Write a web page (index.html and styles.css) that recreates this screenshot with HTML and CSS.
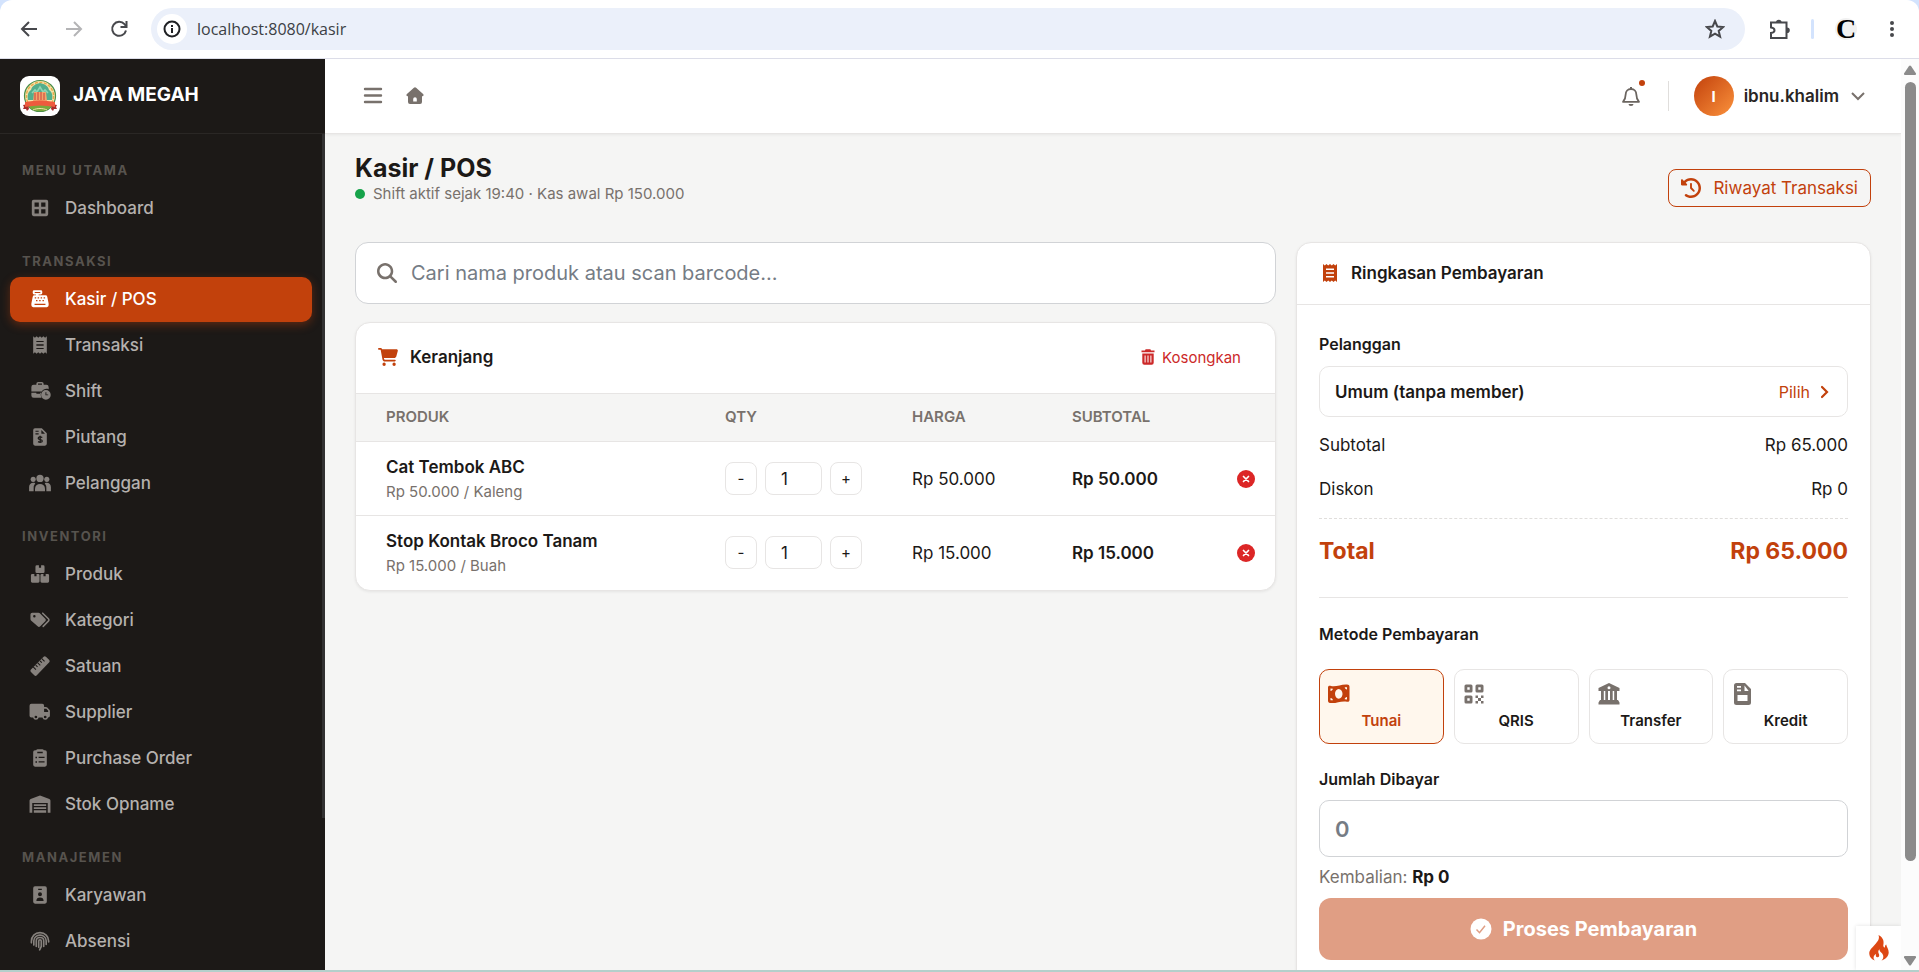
FILE: index.html
```html
<!DOCTYPE html>
<html lang="id">
<head>
<meta charset="utf-8">
<title>Kasir / POS - Jaya Megah</title>
<link rel="stylesheet" href="styles.css">
</head>
<body>
<div class="toolbar-wrap">
  <div class="toolbar">
    <button class="tool" aria-label="Kembali"><svg class="ic18" viewBox="0 0 18 18"><path class="ln" d="M17 9H2.500M9 2L2 9l7 7"/></svg></button>
    <button class="tool tool-off" aria-label="Maju"><svg class="ic18" viewBox="0 0 18 18"><path class="ln" d="M1 9h14.500M9 2l7 7-7 7"/></svg></button>
    <button class="tool" aria-label="Muat ulang"><svg class="ic18" viewBox="0 0 18 18"><path class="ln" d="M16 10.500A7 7 0 1 1 14.500 4.200L16.500 6.500"/><path class="ln" d="M16.500 1v6h-6"/></svg></button>
    <div class="address">
      <button class="site-info" aria-label="Info situs"><svg class="ic18" viewBox="0 0 18 18"><circle class="ln" cx="9" cy="9" r="7.500"/><path d="M8 8h2v5H8zM8 5h2v2H8z"/></svg></button>
      <input class="url" type="text" value="localhost:8080/kasir" aria-label="Alamat">
      <button class="star" aria-label="Markah"><svg class="ic20" viewBox="0 0 20 20"><path class="ln" d="M10 2l2.300 5.500 5.900.5-4.500 3.900 1.400 5.800-5.100-3.100-5.100 3.100 1.400-5.800L1.800 8l5.900-.5z"/></svg></button>
    </div>
    <button class="tool ext" aria-label="Ekstensi"><svg class="ic22" viewBox="0 0 22 22"><path class="ln" d="M2 4.500h15.500v15.500H2v-5c2.500-.3 3.500-1.300 3.500-2.800S4.500 9.700 2 9.400z"/><path d="M7 4.500a2.800 2.800 0 0 1 5.600 0zM18 9.500a2.800 2.800 0 0 1 0 5.600z"/></svg></button>
    <span class="tool-sep"></span>
    <button class="profile" aria-label="Profil">C</button>
    <button class="tool menu-dots" aria-label="Menu"><svg class="ic18" viewBox="0 0 18 18"><circle cx="9" cy="3" r="2"/><circle cx="9" cy="9" r="2"/><circle cx="9" cy="15" r="2"/></svg></button>
  </div>
</div>

<div class="app">
  <aside class="sidebar">
    <div class="brand">
      <svg class="brand-logo" viewBox="0 0 40 40">
        <rect width="40" height="40" rx="9" fill="#fff"/>
        <circle cx="20" cy="20" r="15.500" fill="#f6e3a9" stroke="#4d8f4a" stroke-width="1.200"/>
        <circle cx="20" cy="20" r="13.600" fill="none" stroke="#e9a94b" stroke-width="1.400" stroke-dasharray="3 1.500"/>
        <path d="M8 24c-1-5 0-8 3-10 1-4 4-6 9-7 5 1 8 3 9 7 3 2 4 5 3 10z" fill="#52ae8c"/>
        <path d="M12 17l3-3 2 2 3-5 3 5 2-2 3 3" fill="none" stroke="#8fd3b4" stroke-width="1.600"/>
        <path d="M14 16h12l1 9H13z" fill="#f3a56c"/>
        <path d="M15 17v7M18 16v8M21 16v8M24 17v7" stroke="#c9403a" stroke-width="1"/>
        <path d="M8 29l24 0c-2 4-6 6-12 6s-10-2-12-6z" fill="#79a93c"/>
        <path d="M3 29l5-1 1 5-2 2-1-2-3 0 1-2zM37 29l-5-1-1 5 2 2 1-2 3 0-1-2z" fill="#a92d2b"/>
        <path d="M5 26c10-2 20-2 30 0v5c-10-2-20-2-30 0z" fill="#ee5b3d"/>
        <path d="M13 34c4-2 10-2 14 0" fill="none" stroke="#f6e3a9" stroke-width="1"/>
      </svg>
      <span class="brand-name">JAYA MEGAH</span>
    </div>
    <nav class="nav">
      <h2 class="nav-label">MENU UTAMA</h2>
      <a class="nav-item" href="#"><svg class="nav-ic" viewBox="0 0 22 22"><path fill-rule="evenodd" d="M4 2h14a2 2 0 0 1 2 2v14a2 2 0 0 1-2 2H4a2 2 0 0 1-2-2V4a2 2 0 0 1 2-2zM5 5v4.700h4.700V5zM12.300 5v4.700H17V5zM5 12.300V17h4.700v-4.700zM12.300 12.300V17H17v-4.700z"/></svg>Dashboard</a>
      <h2 class="nav-label">TRANSAKSI</h2>
      <a class="nav-item nav-active" href="#"><svg class="nav-ic" viewBox="0 0 22 22"><path fill-rule="evenodd" d="M4.500 1.500h7.500a1.500 1.500 0 0 1 1.500 1.500v1.500A1.500 1.500 0 0 1 12 6H9.500v1h7.500a2 2 0 0 1 2 1.600l1.500 7.400v2a2 2 0 0 1-2 2h-15a2 2 0 0 1-2-2v-2L3 8.600A2 2 0 0 1 5 7h1.500V6h-2A1.500 1.500 0 0 1 3 4.500V3a1.500 1.500 0 0 1 1.500-1.500zM5.200 3.200v1.100h6.200V3.200zM5.200 9v1.500h1.600V9zM8.400 9v1.500H10V9zM11.700 9v1.500h1.600V9zM15 9v1.500h1.600V9zM6.600 12v1.500h1.600V12zM10.100 12v1.500h1.600V12zM13.700 12v1.500h1.600V12zM5 16.200v1.300h12v-1.300z"/></svg>Kasir / POS</a>
      <a class="nav-item" href="#"><svg class="nav-ic" viewBox="0 0 22 22"><path fill-rule="evenodd" d="M3.500 1.500L5.400 3l1.900-1.500L9.100 3 11 1.500 12.900 3l1.800-1.500L16.600 3l1.900-1.500v19L16.600 19l-1.900 1.500-1.800-1.500L11 20.500 9.100 19l-1.800 1.500L5.400 19l-1.900 1.500zM7 6.500v1.300h8V6.500zM7 10.300v1.400h8v-1.400zM7 14.200v1.300h8v-1.300z"/></svg>Transaksi</a>
      <a class="nav-item" href="#"><svg class="nav-ic" viewBox="0 0 22 22"><path fill-rule="evenodd" d="M7 4V3a2 2 0 0 1 2-2h4a2 2 0 0 1 2 2v1h3a2.500 2.500 0 0 1 2.500 2.500V9c-3-1-6 0-7.500 2.500H1.500v-5A2.500 2.500 0 0 1 4 4zM8.800 2.800V4h4.400V2.800zM1.500 13h5.500v1h4v-1h1c-.5 2 0 4 .8 5.500H4A2.500 2.500 0 0 1 1.500 16z"/><path fill-rule="evenodd" d="M17.500 10a5.300 5.300 0 1 1 0 10.600 5.300 5.300 0 0 1 0-10.600zM17 12.500v3.300h3v-1h-2v-2.300z"/></svg>Shift</a>
      <a class="nav-item" href="#"><svg class="nav-ic" viewBox="0 0 22 22"><path fill-rule="evenodd" d="M5.500 1.500H13l5.500 5.500v11.500a2 2 0 0 1-2 2h-11a2 2 0 0 1-2-2v-15a2 2 0 0 1 2-2zM6 4v1.200h3.500V4zM6 7v1.200h3.500V7zM12.500 3.300v4.200h4z"/><path fill="none" stroke="#1c1917" stroke-width="1.400" d="M13.500 11.500c-2-1.200-4.500-.8-4.500.8 0 2 4.500 1 4.500 3 0 1.600-2.500 2-4.700.8M11.200 9.700v8"/></svg>Piutang</a>
      <a class="nav-item" href="#"><svg class="nav-ic wide" viewBox="0 0 26 22"><circle cx="13" cy="6" r="4"/><circle cx="5.500" cy="7" r="2.800"/><circle cx="20.500" cy="7" r="2.800"/><path d="M7.500 20v-2.500a5.500 5.500 0 0 1 11 0V20zM1 20v-4.500c0-3.500 3-5.500 6.800-4.300A8 8 0 0 0 6 17v3zM25 20v-4.500c0-3.500-3-5.500-6.800-4.300A8 8 0 0 1 20 17v3z"/></svg>Pelanggan</a>
      <h2 class="nav-label">INVENTORI</h2>
      <a class="nav-item" href="#"><svg class="nav-ic" viewBox="0 0 22 22"><path fill-rule="evenodd" d="M7.500 1.500h2.300v2.500h2.400V1.500h2.300a1.500 1.500 0 0 1 1.500 1.500v5.500a1.500 1.500 0 0 1-1.500 1.500h-7A1.500 1.500 0 0 1 6 8.500V3a1.500 1.500 0 0 1 1.500-1.500zM2.500 11h2.300v2.500h2.400V11h1.800a1.500 1.500 0 0 1 1.500 1.500V19A1.500 1.500 0 0 1 9 20.500H2.500A1.500 1.500 0 0 1 1 19v-6.500A1.500 1.500 0 0 1 2.500 11zM13 11h1.800v2.500h2.400V11h2.300a1.500 1.500 0 0 1 1.500 1.500V19a1.500 1.500 0 0 1-1.500 1.500H13a1.500 1.500 0 0 1-1.500-1.500v-6.500A1.500 1.500 0 0 1 13 11z"/></svg>Produk</a>
      <a class="nav-item" href="#"><svg class="nav-ic" viewBox="0 0 22 22"><path fill-rule="evenodd" d="M.5 5a2 2 0 0 1 2-2h6.800a2 2 0 0 1 1.500.6l6 6a2 2 0 0 1 0 2.900l-5.500 5.500a2 2 0 0 1-2.900 0l-7.300-6.500a2 2 0 0 1-.6-1.500zM4.800 5.500a1.300 1.300 0 1 0 0 2.700 1.300 1.300 0 0 0 0-2.700z"/><path fill="none" stroke="currentColor" stroke-width="1.700" stroke-linecap="round" d="M14 3.500l6.200 6.200a1.800 1.800 0 0 1 0 2.600L14.500 18"/></svg>Kategori</a>
      <a class="nav-item" href="#"><svg class="nav-ic" viewBox="0 0 22 22"><path d="M.8 15L15 .8a2 2 0 0 1 2.500 0l3.700 3.700a2 2 0 0 1 0 2.500L7.500 21.200a2 2 0 0 1-2.800 0L.8 17.300a2 2 0 0 1 0-2.300z"/><path stroke="#1c1917" stroke-width="1.200" d="M3.500 12l3 3M6.300 10l2 2M8.300 7.300l3 3M11 5.300l2 2M13 2.800l3 3"/></svg>Satuan</a>
      <a class="nav-item" href="#"><svg class="nav-ic" viewBox="0 0 22 22"><path fill-rule="evenodd" d="M1.500 2h12A2 2 0 0 1 15.500 4v1.500h2a2 2 0 0 1 1.500.6l2.300 2.300a2 2 0 0 1 .6 1.500V15a2 2 0 0 1-2 2 3.200 3.200 0 0 1-6.200 0H9.600a3.200 3.200 0 0 1-6.200 0H1.500a2 2 0 0 1-2-2V4a2 2 0 0 1 2-2zM15.500 7.500v3.500h4.500V9.500l-2-2zM6.500 15a1.500 1.500 0 1 0 0 3 1.500 1.500 0 0 0 0-3zM16.700 15a1.500 1.500 0 1 0 0 3 1.500 1.500 0 0 0 0-3z"/></svg>Supplier</a>
      <a class="nav-item" href="#"><svg class="nav-ic" viewBox="0 0 22 22"><path fill-rule="evenodd" d="M8.500 1.500h5a2 2 0 0 1 1.800 1h1.200a2 2 0 0 1 2 2v14a2 2 0 0 1-2 2h-11a2 2 0 0 1-2-2v-14a2 2 0 0 1 2-2h1.200a2 2 0 0 1 1.800-1zM8 4v1.700h6V4zM6 9.500v1.700h1.700V9.500zM9.500 9.500v1.500H16V9.500zM6 14.500v1.700h1.700v-1.700zM9.500 14.500V16H16v-1.500z"/></svg>Purchase Order</a>
      <a class="nav-item" href="#"><svg class="nav-ic" viewBox="0 0 22 22"><path fill-rule="evenodd" d="M-.5 20.500V7.200a2 2 0 0 1 1.200-1.800l9.500-3.500a2 2 0 0 1 1.600 0l9.500 3.500a2 2 0 0 1 1.200 1.800v13.300h-3V10H2.500v10.500zM4.200 11.200h13.600v2H4.200zM4.200 14.500h13.600v2H4.200zM4.200 18h13.600v2.500H4.200z"/></svg>Stok Opname</a>
      <h2 class="nav-label">MANAJEMEN</h2>
      <a class="nav-item" href="#"><svg class="nav-ic" viewBox="0 0 22 22"><path fill-rule="evenodd" d="M5.500 1.500h11a2 2 0 0 1 2 2v15a2 2 0 0 1-2 2h-11a2 2 0 0 1-2-2v-15a2 2 0 0 1 2-2zM9 4v1.500h4V4zM11 8a2.200 2.200 0 1 0 0 4.400A2.200 2.200 0 0 0 11 8zM7 17.500h8c0-2.500-1.500-3.800-4-3.800s-4 1.300-4 3.800z"/></svg>Karyawan</a>
      <a class="nav-item" href="#"><svg class="nav-ic" viewBox="0 0 22 22"><g fill="none" stroke="currentColor" stroke-width="1.800" stroke-linecap="round"><path d="M1.500 13v-1.500C1.500 6 5.500 1.800 11 1.800S20.500 6 20.500 11v1"/><path d="M4.200 15.500v-4.700c0-3.500 3-6.300 6.800-6.300s6.800 2.800 6.800 6.300v4"/><path d="M6.900 17v-6.200C6.900 8.700 8.700 7.200 11 7.200s4.100 1.500 4.100 3.600V17"/><path d="M9.600 18v-7a1.400 1.400 0 0 1 2.800 0v6l-1.800 3.700"/></g></svg>Absensi</a>
    </nav>
    <span class="side-thumb"></span>
  </aside>

  <div class="page">
    <header class="topbar">
      <button class="icon-btn" aria-label="Menu"><svg class="ic20" viewBox="0 0 20 20"><path class="bar" d="M2 3h16M2 9.500h16M2 16h16"/></svg></button>
      <a class="icon-btn" href="#" aria-label="Beranda"><svg class="ic20" viewBox="0 0 20 20"><path fill-rule="evenodd" d="M8.900 1.700a1.600 1.600 0 0 1 2.200 0l7 6.300c1 1 .4 2.300-.8 2.300H17V16a2 2 0 0 1-2 2H5a2 2 0 0 1-2-2v-5.700h-.3c-1.200 0-1.800-1.300-.8-2.300zM8.200 15.500h3.600V13a1.800 1.800 0 0 0-3.600 0z"/></svg></a>
      <span class="spacer"></span>
      <button class="bell" aria-label="Notifikasi"><svg class="ic22" viewBox="0 0 22 22"><path fill="none" stroke="currentColor" stroke-width="1.800" stroke-linejoin="round" d="M11 4c-3.300 0-5.300 2.300-5.300 5.300 0 3.500-1 5.500-2.700 7.500h16c-1.700-2-2.700-4-2.700-7.500C16.300 6.300 14.300 4 11 4z"/><path d="M10 2h2v2h-2zM8.500 19h5a2.500 2 0 0 1-5 0z"/></svg><span class="bell-dot"></span></button>
      <span class="top-sep"></span>
      <button class="user"><span class="avatar">I</span><span class="user-name">ibnu.khalim</span><svg class="chev" viewBox="0 0 14 14"><path fill="none" stroke="currentColor" stroke-width="2" d="M1 4l6 6 6-6"/></svg></button>
    </header>

    <main class="content">
      <div class="page-head">
        <div>
          <h1 class="title">Kasir / POS</h1>
          <p class="shift"><span class="dot"></span>Shift aktif sejak 19:40 · Kas awal Rp 150.000</p>
        </div>
        <a class="history" href="#"><svg class="ic20" viewBox="0 0 512 512"><path d="M75 75L41 41C25.900 25.900 0 36.600 0 57.900V168c0 13.300 10.700 24 24 24H134.100c21.400 0 32.100-25.900 17-41l-30.800-30.800C155 85.500 203 64 256 64c106 0 192 86 192 192s-86 192-192 192c-40.800 0-78.600-12.700-109.700-34.400c-14.500-10.100-34.400-6.600-44.600 7.900s-6.600 34.400 7.900 44.600C151.200 495 201.700 512 256 512c141.400 0 256-114.600 256-256S397.400 0 256 0C185.300 0 121.300 28.700 75 75zm181 53c-13.300 0-24 10.700-24 24V256c0 6.400 2.500 12.500 7 17l72 72c9.400 9.400 24.600 9.400 33.900 0s9.400-24.600 0-33.900l-65-65V152c0-13.300-10.700-24-24-24z"/></svg>Riwayat Transaksi</a>
      </div>

      <div class="columns">
        <section class="left">
          <label class="search">
            <svg class="ic20" viewBox="0 0 512 512"><path d="M416 208c0 45.900-14.900 88.300-40 122.700L502.600 457.400c12.500 12.500 12.500 32.800 0 45.300s-32.800 12.500-45.300 0L330.700 376c-34.400 25.200-76.800 40-122.700 40C93.100 416 0 322.900 0 208S93.100 0 208 0S416 93.100 416 208zM208 352a144 144 0 1 0 0-288 144 144 0 1 0 0 288z"/></svg>
            <input type="text" placeholder="Cari nama produk atau scan barcode..." aria-label="Cari produk">
          </label>

          <div class="card">
            <div class="cart-head">
              <svg class="ic20" viewBox="0 0 576 512"><path d="M0 24C0 10.700 10.700 0 24 0H69.500c22 0 41.500 12.800 50.600 32h411c26.300 0 45.500 25 38.600 50.400l-41 152.300c-8.500 31.400-37 53.300-69.500 53.300H170.700l5.400 28.500c2.200 11.300 12.100 19.500 23.600 19.500H488c13.300 0 24 10.700 24 24s-10.700 24-24 24H199.700c-34.600 0-64.300-24.600-70.700-58.500L77.400 54.500c-.7-3.800-4-6.500-7.900-6.500H24C10.700 48 0 37.300 0 24zM128 464a48 48 0 1 1 96 0 48 48 0 1 1 -96 0zm336-48a48 48 0 1 1 0 96 48 48 0 1 1 0-96z"/></svg>
              <h2 class="card-title">Keranjang</h2>
              <button class="clear"><svg class="ic16" viewBox="0 0 16 16"><path fill-rule="evenodd" d="M5 1.500L5.600.3h4.800l.6 1.200h3.500v1.800h-13V1.500zM2.300 4.500h11.400v9.300a2 2 0 0 1-2 2H4.300a2 2 0 0 1-2-2zM4.600 6.500v7h1v-7zM7.500 6.500v7h1v-7zM10.400 6.500v7h1v-7z"/></svg>Kosongkan</button>
            </div>
            <table class="cart">
              <colgroup><col><col class="c-qty"><col class="c-money"><col class="c-money"><col class="c-del"></colgroup>
              <thead><tr><th>PRODUK</th><th>QTY</th><th>HARGA</th><th>SUBTOTAL</th><th></th></tr></thead>
              <tbody>
                <tr>
                  <td><div class="p-name">Cat Tembok ABC</div><div class="p-unit">Rp 50.000 / Kaleng</div></td>
                  <td><div class="qty"><button aria-label="Kurangi">-</button><input type="text" inputmode="numeric" value="1" aria-label="Jumlah Cat Tembok ABC"><button aria-label="Tambah">+</button></div></td>
                  <td>Rp 50.000</td><td class="strong">Rp 50.000</td>
                  <td><button class="del" aria-label="Hapus"><svg class="ic18" viewBox="0 0 18 18"><circle cx="9" cy="9" r="9"/><path stroke="#fff" stroke-width="1.700" stroke-linecap="round" d="M6.500 6.500l5 5M11.500 6.500l-5 5"/></svg></button></td>
                </tr>
                <tr>
                  <td><div class="p-name">Stop Kontak Broco Tanam</div><div class="p-unit">Rp 15.000 / Buah</div></td>
                  <td><div class="qty"><button aria-label="Kurangi">-</button><input type="text" inputmode="numeric" value="1" aria-label="Jumlah Stop Kontak Broco Tanam"><button aria-label="Tambah">+</button></div></td>
                  <td>Rp 15.000</td><td class="strong">Rp 15.000</td>
                  <td><button class="del" aria-label="Hapus"><svg class="ic18" viewBox="0 0 18 18"><circle cx="9" cy="9" r="9"/><path stroke="#fff" stroke-width="1.700" stroke-linecap="round" d="M6.500 6.500l5 5M11.500 6.500l-5 5"/></svg></button></td>
                </tr>
              </tbody>
            </table>
          </div>
        </section>

        <section class="card pay">
          <div class="pay-head">
            <svg class="ic20" viewBox="0 0 20 20"><path fill-rule="evenodd" d="M3 1l1.800 1.500L6.500 1l1.700 1.500L10 1l1.800 1.500L13.500 1l1.700 1.500L17 1v18l-1.800-1.500-1.700 1.500-1.700-1.500L10 19l-1.800-1.500L6.500 19l-1.700-1.500L3 19zM6 5.500v1.500h8V5.500zM6 9.300v1.500h8V9.300zM6 13v1.500h8V13z"/></svg>
            <h2 class="card-title">Ringkasan Pembayaran</h2>
          </div>
          <div class="pay-body">
            <h3 class="label">Pelanggan</h3>
            <button class="customer"><span class="customer-name">Umum (tanpa member)</span><span class="pick">Pilih<svg class="pick-ic" viewBox="0 0 10 14"><path fill="none" stroke="currentColor" stroke-width="2.200" stroke-linecap="round" d="M2 2l5 5-5 5"/></svg></span></button>
            <div class="line"><span>Subtotal</span><span>Rp 65.000</span></div>
            <div class="line"><span>Diskon</span><span>Rp 0</span></div>
            <div class="total"><span>Total</span><span>Rp 65.000</span></div>
            <h3 class="label method-label">Metode Pembayaran</h3>
            <div class="methods">
              <button class="method method-on" aria-pressed="true"><svg class="ic22" viewBox="0 0 22 22"><path fill-rule="evenodd" d="M0 4.500C0 3 1 2.500 2.300 2.800 8 4.500 12 1.200 19 1.500c1.500.1 2.500.8 2.500 2.200v13c0 1.800-1 2.300-2.500 2C12.500 17.500 9 20.700 2 20c-1.300-.2-2-1-2-2.200zM10.700 6C8.500 6 7 8.200 7 10.800s1.500 4.900 3.700 4.900 3.800-2.300 3.800-4.900S12.900 6 10.700 6zM2.500 5.500V8c1.200-.1 2.300-1.200 2.400-2.300zM19 4.200l-2.300.1c.1 1.200 1.100 2.200 2.300 2.300zM2.500 17.200l2.400.1c0-1.300-1.100-2.400-2.400-2.300zM19 14c-1.200 0-2.200 1-2.300 2.200l2.300.3z"/></svg><span>Tunai</span></button>
              <button class="method"><svg class="ic22" viewBox="0 0 22 22"><path fill-rule="evenodd" d="M3 1.500h5A1.500 1.500 0 0 1 9.500 3v5A1.500 1.500 0 0 1 8 9.500H3A1.500 1.500 0 0 1 1.500 8V3A1.500 1.500 0 0 1 3 1.500zM4.300 4.300v2.400h2.400V4.300zM14 1.500h5A1.500 1.500 0 0 1 20.500 3v5A1.500 1.500 0 0 1 19 9.500h-5A1.500 1.500 0 0 1 12.500 8V3A1.500 1.500 0 0 1 14 1.500zM15.300 4.300v2.400h2.400V4.300zM3 12.500h5A1.500 1.500 0 0 1 9.500 14v5A1.500 1.500 0 0 1 8 20.500H3A1.500 1.500 0 0 1 1.500 19v-5A1.500 1.500 0 0 1 3 12.500zM4.300 15.300v2.400h2.400v-2.400zM12.500 12.500H15V15h-2.500zM18 12.500h2.500V15H18zM15 15h3v3h-3zM12.500 18H15v2.500h-2.500zM18 18h2.500v2.500H18z"/></svg><span>QRIS</span></button>
              <button class="method"><svg class="ic22" viewBox="0 0 22 22"><path fill-rule="evenodd" d="M11 0l10.500 5v3H.5V5zM11 3.200a1.500 1.500 0 1 0 0 3 1.500 1.500 0 0 0 0-3zM3 8h2.800v9H3zM7.300 8H10v9H7.300zM12 8h2.700v9H12zM16.200 8H19v9h-2.800zM2 17h18l1.500 2.500V21.500H.5v-2z"/></svg><span>Transfer</span></button>
              <button class="method"><svg class="ic22" viewBox="0 0 22 22"><path fill-rule="evenodd" d="M4.500 0h8.500l6 6v13.500A2.500 2.500 0 0 1 16.500 22h-12A2.500 2.500 0 0 1 2 19.500v-17A2.500 2.500 0 0 1 4.500 0zM5 3v1.700h4V3zM5 6.500v1.700h4V6.500zM12.500 2.500V8h4.200zM5.500 12v6h10v-6z"/></svg><span>Kredit</span></button>
            </div>
            <label class="label" for="paid">Jumlah Dibayar</label>
            <input class="paid" id="paid" type="text" placeholder="0">
            <p class="change">Kembalian: <b>Rp 0</b></p>
            <button class="submit"><svg class="ic22" viewBox="0 0 22 22"><circle cx="11" cy="11" r="10.500"/><path fill="none" stroke="#e09e84" stroke-width="1.500" d="M6.500 11.500l3 3.200 5.500-7"/></svg>Proses Pembayaran</button>
          </div>
        </section>
      </div>
    </main>
    <button class="debug" aria-label="Debug"><svg class="flame" viewBox="0 0 20 26"><path d="M9.500 0c1.500 4-1 6.500-3.500 9.500C3 13 0 15 .3 19c.2 3.300 2.500 5.500 5.500 6.500-2-2.500-1.300-5 1.200-6.500-.5 2 0 3 1.300 3.200 1.700.2 2.500-1.500 1.500-3.500-.8-1.700-.7-3 .6-4.500.2 2.300 1.500 2.700 2.800 4.200 1.700 2 1.600 5-.7 7.200 4-1.200 7-4 7.200-8 .1-3.500-2-5.200-2.500-8-1 .8-1.400 1.700-1.200 3-1.800-.3-2-1.700-1.500-3.800C15.200 5 13 1.800 9.500 0z"/></svg></button>
  </div>

  <div class="scroll" aria-hidden="true">
    <svg class="arrow" viewBox="0 0 12 10"><path d="M5 1a1.300 1.300 0 0 1 2 0l5 7.500c.3.700 0 1.500-1 1.500H1c-1 0-1.300-.8-1-1.500z"/></svg>
    <span class="thumb"></span>
    <span class="spacer"></span>
    <svg class="arrow" viewBox="0 0 12 10"><path d="M5 9a1.300 1.300 0 0 0 2 0l5-7.500C12.300.8 12 0 11 0H1C0 0-.3.800 0 1.500z"/></svg>
  </div>
</div>
<div class="edge"></div>
</body>
</html>
```

FILE: styles.css
```css
* { box-sizing: border-box; }
body {
  margin: 0;
  height: 100vh;
  display: flex;
  flex-direction: column;
  overflow: hidden;
  font-family: Inter, "Liberation Sans", sans-serif;
  font-size: 17px;
  color: #1c1917;
  background: #fff;
}
button, input { font: inherit; color: inherit; }
button { background: none; border: 0; padding: 0; }
a { color: inherit; text-decoration: none; }
h1, h2, h3, p { margin: 0; }
svg { fill: currentColor; flex: none; display: block; }
.ic16 { width: 16px; height: 16px; }
.ic18 { width: 18px; height: 18px; }
.ic20 { width: 20px; height: 20px; }
.ic22 { width: 22px; height: 22px; }
.ln { fill: none; stroke: currentColor; stroke-width: 2; }
.bar { fill: none; stroke: currentColor; stroke-width: 2.400; stroke-linecap: round; }
.spacer { flex: 1; }

/* browser toolbar */
.toolbar-wrap { background: #d3e3fd; flex: none; }
.toolbar {
  height: 59px;
  display: flex;
  align-items: center;
  padding: 0 18px 0 20px;
  background: #fff;
  border-bottom: 1px solid #dcdde8;
  border-radius: 12px 12px 0 0;
  color: #47484c;
}
.tool { margin-right: 27px; }
.tool-off { color: #b4b4b6; }
.address {
  flex: 1;
  display: flex;
  align-items: center;
  height: 42px;
  margin-left: -4px;
  padding: 0 20px 0 6px;
  border-radius: 21px;
  background: #ebf0fa;
}
.site-info {
  width: 30px;
  height: 30px;
  border-radius: 50%;
  background: #fff;
  display: grid;
  place-items: center;
  color: #202124;
}
.url {
  flex: 1;
  border: 0;
  background: none;
  padding: 0 10px;
  font-family: "Open Sans", "Noto Sans", sans-serif;
  font-size: 16px;
  color: #3c4045;
}
.ext { margin: 0 20px 0 24px; }
.tool-sep { width: 3px; height: 20px; border-radius: 2px; background: #d3e3fd; }
.profile {
  width: 22px;
  height: 22px;
  margin: 0 26px 0 21px;
  border-radius: 50%;
  background: #f1f1f1;
  color: #000;
  font: bold 28px/20px "Liberation Serif", serif;
}
.menu-dots { margin: 0; }

/* frame */
.app { flex: 1; display: flex; min-height: 0; }
.edge { height: 2px; flex: none; background: #b4cfcb; }

/* sidebar */
.sidebar {
  position: relative;
  width: 325px;
  flex: none;
  overflow: hidden;
  background: #1c1917;
}
.brand {
  height: 75px;
  display: flex;
  align-items: center;
  gap: 13px;
  padding: 0 20px;
  border-bottom: 1px solid #2a2725;
}
.brand-logo { width: 40px; height: 40px; }
.brand-name { font-size: 19px; line-height: 24px; padding-bottom: 2px; font-weight: 700; color: #fff; }
.nav {
  display: flex;
  flex-direction: column;
  gap: 1px;
  padding: 7px 13px 0 10px;
}
.nav-label {
  padding: 21px 12px 6px;
  font-size: 13px;
  line-height: 17px;
  font-weight: 700;
  letter-spacing: 0.12em;
  color: #57534e;
}
.nav-item {
  height: 45px;
  display: flex;
  align-items: center;
  gap: 13px;
  padding: 0 18px 1px;
  border-radius: 10px;
  font-size: 17px;
  font-weight: 500;
  color: #b5b1ae;
}
.nav-ic { width: 24px; height: 20px; color: #86817d; overflow: visible; }
.nav-active { background: #c2410c; color: #fff; box-shadow: 0 3px 10px rgba(194, 65, 12, .4); }
.nav-active .nav-ic { color: #fff; }
.side-thumb {
  position: absolute;
  top: 75px;
  right: 0;
  width: 3px;
  height: 684px;
  background: #323131;
}

/* page */
.page {
  position: relative;
  flex: 1;
  min-width: 0;
  overflow: hidden;
  background: #f5f5f4;
}
.topbar {
  position: relative;
  height: 75px;
  display: flex;
  align-items: center;
  gap: 22px;
  padding: 0 36px 0 38px;
  background: #fff;
  border-bottom: 1px solid #e7e5e4;
  box-shadow: 0 1px 3px rgba(0, 0, 0, .06);
  color: #78716c;
}
.bell { position: relative; color: #6b6560; }
.bell-dot {
  position: absolute;
  top: -5px;
  right: -3px;
  width: 6px;
  height: 6px;
  border-radius: 50%;
  background: #c2410c;
}
.top-sep { width: 1px; height: 30px; margin-left: 4px; background: #e0dedc; }
.user { display: flex; align-items: center; gap: 10px; margin-left: 3px; }
.avatar {
  width: 40px;
  height: 40px;
  border-radius: 50%;
  display: grid;
  place-items: center;
  background: linear-gradient(135deg, #c2410c, #fb923c);
  color: #fff;
  font-size: 15px;
  font-weight: 700;
}
.user-name { font-size: 17px; font-weight: 600; color: #292524; }
.chev { width: 14px; height: 14px; margin-left: 2px; color: #78716c; }

.content { padding: 18px 30px 30px; }
.page-head { display: flex; justify-content: space-between; align-items: flex-start; height: 70px; }
.title { font-size: 25px; line-height: 32px; font-weight: 700; }
.shift { display: flex; align-items: center; gap: 8px; font-size: 15px; line-height: 20px; color: #78716c; }
.dot { width: 10px; height: 10px; border-radius: 50%; background: #16a34a; }
.history {
  display: flex;
  align-items: center;
  gap: 12px;
  height: 38px;
  margin-top: 17px;
  padding: 0 12px;
  border: 1px solid #c2410c;
  border-radius: 8px;
  font-size: 17px;
  color: #c2410c;
}
.columns {
  display: grid;
  grid-template-columns: minmax(0, 1fr) 575px;
  gap: 20px;
  align-items: start;
  margin-top: 20px;
}
.left { display: grid; gap: 18px; }
.search {
  display: flex;
  align-items: center;
  gap: 14px;
  height: 62px;
  padding: 0 21px;
  border: 1px solid #d1d3d6;
  border-radius: 13px;
  background: #fff;
  color: #78716c;
}
.search input { flex: 1; border: 0; padding: 0; outline: 0; font-size: 20px; background: none; }
.search input::placeholder { color: #757c85; opacity: 1; }
.card {
  overflow: hidden;
  border: 1px solid #e7e5e4;
  border-radius: 15px;
  background: #fff;
  box-shadow: 0 1px 3px rgba(0, 0, 0, .07);
}
.card-title { font-size: 17px; font-weight: 600; }
.cart-head {
  display: flex;
  align-items: center;
  gap: 12px;
  height: 70px;
  padding: 0 34px 2px 22px;
  color: #c2410c;
}
.cart-head .card-title { flex: 1; color: #1c1917; }
.clear { display: flex; align-items: center; gap: 6px; font-size: 15px; color: #cc2929; }
.cart { width: 100%; table-layout: fixed; border-collapse: collapse; }
.c-qty { width: 187px; }
.c-money { width: 160px; }
.c-del { width: 58px; }
.cart th {
  height: 48px;
  padding: 0 15px 2px;
  border: solid #e7e5e4;
  border-width: 1px 0;
  background: #f5f5f4;
  text-align: left;
  font-size: 15px;
  font-weight: 600;
  color: #78716c;
}
.cart td { height: 74px; padding: 0 15px; border-bottom: 1px solid #e7e5e4; }
.cart tr:last-child td { border-bottom: 0; }
.cart th:first-child, .cart td:first-child { padding-left: 30px; }
.cart td:last-child { padding: 0 20px; }
.p-name { font-weight: 600; line-height: 26px; }
.p-unit { font-size: 15px; line-height: 24px; color: #78716c; }
.strong { font-weight: 600; }
.qty { display: flex; gap: 8px; }
.qty button {
  width: 32px;
  height: 33px;
  border: 1px solid #e7e5e4;
  border-radius: 8px;
  background: #fff;
  font-size: 15px;
}
.qty input {
  width: 57px;
  height: 33px;
  padding: 0 15px;
  border: 1px solid #e7e5e4;
  border-radius: 8px;
  font-size: 17px;
}
.del { display: block; color: #dc2626; }

/* payment */
.pay-head {
  display: flex;
  align-items: center;
  gap: 11px;
  height: 62px;
  padding: 0 23px 2px;
  border-bottom: 1px solid #e7e5e4;
  color: #c2410c;
}
.pay-head .card-title { color: #1c1917; }
.pay-body { display: flex; flex-direction: column; padding: 27px 22px 40px; }
.label { font-size: 16px; line-height: 24px; font-weight: 600; }
.customer {
  display: flex;
  justify-content: space-between;
  align-items: center;
  height: 51px;
  margin: 10px 0 6px;
  padding: 0 17px 0 15px;
  border: 1px solid #e7e5e4;
  border-radius: 10px;
  text-align: left;
}
.customer-name { font-weight: 600; }
.pick { display: flex; align-items: center; gap: 10px; font-size: 16px; color: #c2410c; }
.pick-ic { width: 10px; height: 14px; }
.line { display: flex; justify-content: space-between; line-height: 44px; }
.total {
  display: flex;
  justify-content: space-between;
  margin-top: 7px;
  padding: 16px 0 30px;
  border-top: 1px dashed #e0dedc;
  border-bottom: 1px solid #e7e5e4;
  font-size: 23px;
  line-height: 32px;
  font-weight: 700;
  color: #c2410c;
}
.method-label { margin-top: 24px; }
.methods { display: grid; grid-template-columns: repeat(4, 1fr); gap: 10px; margin: 23px 0; }
.method {
  display: flex;
  flex-direction: column;
  align-items: stretch;
  justify-content: center;
  gap: 6px;
  height: 75px;
  padding: 0 8px;
  border: 1px solid #e7e5e4;
  border-radius: 10px;
  font-size: 15px;
  line-height: 20px;
  font-weight: 600;
}
.method svg { color: #78716c; }
.method-on { background: #fff7ed; border-color: #c2410c; color: #c2410c; }
.method-on svg { color: #c2410c; }
.paid {
  height: 57px;
  margin-top: 9px;
  padding: 0 15px;
  border: 1px solid #d1d3d6;
  border-radius: 10px;
  font-size: 22px;
  font-weight: 600;
}
.paid::placeholder { color: #757c85; opacity: 1; }
.change { margin: 8px 0; line-height: 25px; color: #78716c; }
.change b { color: #1c1917; font-weight: 700; }
.submit {
  display: flex;
  align-items: center;
  justify-content: center;
  gap: 11px;
  height: 62px;
  border-radius: 12px;
  background: #e09e84;
  color: #fff;
  font-size: 20px;
  font-weight: 700;
}
.debug {
  position: absolute;
  right: 0;
  bottom: 0;
  width: 45px;
  height: 44px;
  display: grid;
  place-items: center;
  background: #fff;
  box-shadow: 0 0 4px rgba(0, 0, 0, .12);
  color: #dd4814;
}
.flame { width: 20px; height: 26px; }

/* window scrollbar */
.scroll {
  width: 18px;
  flex: none;
  display: flex;
  flex-direction: column;
  align-items: center;
  gap: 7px;
  padding: 6px 0 4px;
  background: #fcfcfc;
  color: #8b8b8b;
}
.arrow { width: 12px; height: 10px; }
.thumb { width: 11px; height: 86.5%; border-radius: 6px; background: #8b8b8b; }
```
